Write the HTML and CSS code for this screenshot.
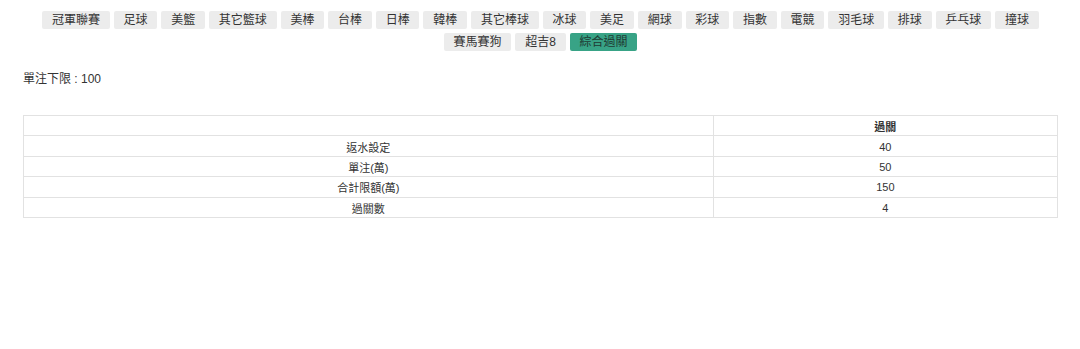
FILE: index.html
```html
<!DOCTYPE html>
<html lang="zh-Hant">
<head>
    <meta charset="UTF-8">
    <meta name="viewport" content="width=device-width, initial-scale=1.0">
    <title>限額設定</title>
    <link rel="stylesheet" href="styles.css">
</head>
<body>
    <div class="page">
        <div class="tabs">
            <span class="tab">冠軍聯賽</span>
            <span class="tab">足球</span>
            <span class="tab">美籃</span>
            <span class="tab">其它籃球</span>
            <span class="tab">美棒</span>
            <span class="tab">台棒</span>
            <span class="tab">日棒</span>
            <span class="tab">韓棒</span>
            <span class="tab">其它棒球</span>
            <span class="tab">冰球</span>
            <span class="tab">美足</span>
            <span class="tab">網球</span>
            <span class="tab">彩球</span>
            <span class="tab">指數</span>
            <span class="tab">電競</span>
            <span class="tab">羽毛球</span>
            <span class="tab">排球</span>
            <span class="tab">乒乓球</span>
            <span class="tab">撞球</span>
            <span class="tab">賽馬賽狗</span>
            <span class="tab">超吉8</span>
            <span class="tab active">綜合過關</span>
        </div>

        <div class="limit">單注下限 : 100</div>

        <table class="limits">
            <thead>
                <tr>
                    <th class="label-col"></th>
                    <th>過關</th>
                </tr>
            </thead>
            <tbody>
                <tr><td>返水設定</td><td>40</td></tr>
                <tr><td>單注(萬)</td><td>50</td></tr>
                <tr><td>合計限額(萬)</td><td>150</td></tr>
                <tr><td>過關數</td><td>4</td></tr>
            </tbody>
        </table>
    </div>
</body>
</html>
```

FILE: styles.css
```css
body {
    margin: 0;
    font-family: "Liberation Sans", "Noto Sans CJK TC", sans-serif;
    color: #333;
    background: #fff;
}
.page {
    padding: 11px 22px 0 23px;
}
.tabs {
    display: flex;
    flex-wrap: wrap;
    justify-content: center;
    gap: 4px;
}
.tab {
    display: inline-block;
    background: #ececec;
    color: #333;
    font-size: 12px;
    line-height: 18px;
    padding: 0 9.8px;
    border-radius: 2px;
}
.tab.active {
    background: #38a386;
    color: #1f3a33;
}
.limit {
    margin-top: 21px;
    font-size: 12px;
    line-height: 14px;
}
.limits {
    width: 100%;
    margin-top: 29px;
    border-collapse: collapse;
    font-size: 11px;
}
.limits th, .limits td {
    border: 1px solid #e2e2e2;
    height: 18.4px;
    padding: 1px 0 0;
    text-align: center;
}
.limits th {
    font-weight: bold;
}
.label-col {
    width: 66.7%;
}
```
